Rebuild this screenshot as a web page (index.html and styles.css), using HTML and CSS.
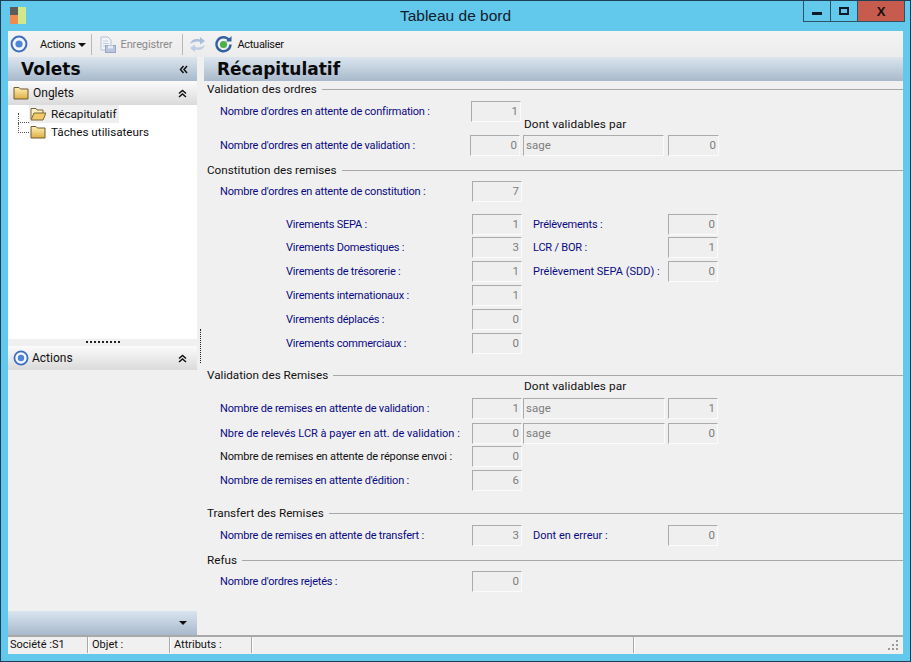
FILE: index.html
```html
<!DOCTYPE html>
<html lang="fr">
<head>
<meta charset="utf-8">
<title>Tableau de bord</title>
<link rel="stylesheet" href="styles.css">
</head>
<body>
<svg class="defs" width="0" height="0" aria-hidden="true">
  <defs>
    <linearGradient id="fold" x1="0" y1="0" x2="0" y2="1"><stop offset="0" stop-color="#fff0b4"/><stop offset="1" stop-color="#dfae45"/></linearGradient>
    <symbol id="target" viewBox="0 0 18 18"><circle cx="9" cy="9" r="7.4" fill="#f4f7fb" stroke="#3d6fc0" stroke-width="2"/><circle cx="9" cy="9" r="3.6" fill="#4f86d8"/></symbol>
    <symbol id="folder" viewBox="0 0 16 14"><path d="M1 13V1.500h5L7.500 3H15v10z" fill="url(#fold)" stroke="#6b5a35"/></symbol>
    <symbol id="folder-open" viewBox="0 0 16 14"><path d="M1 12V1.500h5L7 3h6v3" fill="#fdf1c0" stroke="#7b6536"/><path d="M1 13L4 6h12l-3 7z" fill="#f1c968" stroke="#7b6536"/></symbol>
    <symbol id="chev-up" viewBox="0 0 9 9"><path d="M1 4.500l3.500-3 3.500 3M1 8l3.500-3 3.500 3" fill="none" stroke="#111" stroke-width="1.500"/></symbol>
    <symbol id="chev-left" viewBox="0 0 9 9"><path d="M4.500 1l-3 3.500 3 3.500M8 1L5 4.500 8 8" fill="none" stroke="#111" stroke-width="1.500"/></symbol>
  </defs>
</svg>
<div class="window">
  <header class="titlebar">
    <svg class="app-icon" viewBox="0 0 16 17" width="16" height="17"><rect width="8" height="8" fill="#5c5c5c"/><rect y="8" width="8" height="9" fill="#ef8b4d"/><rect x="8" width="8" height="17" fill="#cfe88a"/></svg>
    <div class="title">Tableau de bord</div>
    <div class="winbtns">
      <div class="winbtn min"><span class="min-glyph"></span></div>
      <div class="winbtn max"><span class="max-glyph"></span></div>
      <div class="winbtn close">X</div>
    </div>
  </header>
  <main class="client">
    <div class="toolbar">
      <svg class="tb-target" width="18" height="18"><use href="#target"/></svg>
      <span class="tb-text tb-actions">Actions</span><span class="caret"></span>
      <span class="tb-sep sep-a"></span>
      <svg class="tb-save" viewBox="0 0 17 17" width="17" height="17"><path d="M2 1h7l3 3v10H2z" fill="#f1f4f8" stroke="#b5c0d2"/><path d="M4 5h5M4 7.500h6M4 10h3" stroke="#c3cede"/><rect x="6.500" y="9.500" width="10" height="7" fill="#b9c4df" stroke="#98a6c4"/><rect x="9" y="9.500" width="5" height="3" fill="#e4e9f3"/></svg>
      <span class="tb-text tb-disabled">Enregistrer</span>
      <span class="tb-sep sep-b"></span>
      <svg class="tb-sync" viewBox="0 0 17 17" width="17" height="17"><path d="M1 8C2 4 6 2 11 3.500V1l5 4-5 3.500V6C7 5 4 6 1 8z" fill="#a9bedc"/><path d="M16 9c-1 4-5 6-10 4.500V16l-5-4 5-3.500V11c4 1 7 0 10-2z" fill="#bccde5"/></svg>
      <svg class="tb-refresh" viewBox="0 0 17 17" width="17" height="17"><path d="M14.200 4.200A7 7 0 1 0 15.500 8.500" fill="none" stroke="#33609f" stroke-width="2.400"/><path d="M11 5.500h5.500V0z" fill="#33609f"/><circle cx="8.500" cy="8.500" r="3.600" fill="#4fb04a"/></svg>
      <span class="tb-text tb-refresh-text">Actualiser</span>
    </div>
    <div class="workspace">
      <aside class="left">
        <div class="panel-head volets"><span>Volets</span><svg class="dbl" width="9" height="9"><use href="#chev-left"/></svg></div>
        <div class="sub-head"><svg class="sub-icon" width="16" height="14"><use href="#folder"/></svg><span class="sub-text">Onglets</span><svg class="chev" width="9" height="9"><use href="#chev-up"/></svg></div>
        <div class="tree">
          <div class="tree-row first"><span class="conn conn-first"></span><span class="node selected"><svg width="16" height="14"><use href="#folder-open"/></svg><span>Récapitulatif</span></span></div>
          <div class="tree-row"><span class="conn conn-last"></span><span class="node"><svg width="16" height="14"><use href="#folder"/></svg><span>Tâches utilisateurs</span></span></div>
        </div>
        <div class="h-split"><span class="h-dots"></span></div>
        <div class="sub-head"><svg class="sub-icon" width="16" height="16"><use href="#target"/></svg><span class="sub-text tight">Actions</span><svg class="chev" width="9" height="9"><use href="#chev-up"/></svg></div>
        <div class="actions-body"></div>
        <div class="panel-foot"><span class="foot-caret"></span></div>
      </aside>
      <div class="v-split"><span class="v-dots"></span></div>
      <section class="right">
        <div class="panel-head recap"><span>Récapitulatif</span></div>
        <div class="form">

          <div class="legend l1"><span>Validation des ordres</span><i></i></div>
          <div class="row r1"><label class="lbl">Nombre d'ordres en attente de confirmation :</label><output class="fld f1">1</output></div>
          <div class="note n1">Dont validables par</div>
          <div class="row r2"><label class="lbl lbl-s">Nombre d'ordres en attente de validation :</label><output class="fld f0">0</output><output class="fld wide">sage</output><output class="fld f3">0</output></div>

          <div class="legend l2"><span>Constitution des remises</span><i></i></div>
          <div class="row r3"><label class="lbl">Nombre d'ordres en attente de constitution :</label><output class="fld f2">7</output></div>

          <div class="row r4"><label class="lbl sub">Virements SEPA :</label><output class="fld f2">1</output><label class="lbl2">Prélèvements :</label><output class="fld f4">0</output></div>
          <div class="row r5a"><label class="lbl sub">Virements Domestiques :</label><output class="fld f2">3</output><label class="lbl2">LCR / BOR :</label><output class="fld f4">1</output></div>
          <div class="row r5"><label class="lbl sub">Virements de trésorerie :</label><output class="fld f2">1</output><label class="lbl2 loose">Prélèvement SEPA (SDD) :</label><output class="fld f4">0</output></div>
          <div class="row r5"><label class="lbl sub">Virements internationaux :</label><output class="fld f2">1</output></div>
          <div class="row r5"><label class="lbl sub">Virements déplacés :</label><output class="fld f2">0</output></div>
          <div class="row r5"><label class="lbl sub">Virements commerciaux :</label><output class="fld f2">0</output></div>

          <div class="legend l3"><span>Validation des Remises</span><i></i></div>
          <div class="note n2">Dont validables par</div>
          <div class="row r6"><label class="lbl">Nombre de remises en attente de validation :</label><output class="fld f2">1</output><output class="fld wide w2">sage</output><output class="fld f4 near">1</output></div>
          <div class="row r7"><label class="lbl loose">Nbre de relevés LCR à payer en att. de validation :</label><output class="fld f2">0</output><output class="fld wide w2">sage</output><output class="fld f4 near">0</output></div>
          <div class="row r8"><label class="lbl dark">Nombre de remises en attente de réponse envoi :</label><output class="fld f2">0</output></div>
          <div class="row r7b"><label class="lbl">Nombre de remises en attente d'édition :</label><output class="fld f2">6</output></div>

          <div class="legend l4"><span>Transfert des Remises</span><i></i></div>
          <div class="row r9"><label class="lbl">Nombre de remises en attente de transfert :</label><output class="fld f2">3</output><label class="lbl2 loose">Dont en erreur :</label><output class="fld f4">0</output></div>

          <div class="legend l5"><span>Refus</span><i></i></div>
          <div class="row r9b"><label class="lbl">Nombre d'ordres rejetés :</label><output class="fld f2">0</output></div>
        </div>
      </section>
    </div>
    <footer class="status">
      <span class="cell c1">Société :S1</span>
      <span class="cell c2">Objet :</span>
      <span class="cell c3">Attributs :</span>
      <span class="cell c4"></span>
      <span class="cell c5"></span>
      <svg class="grip" width="11" height="11" viewBox="0 0 11 11"><path d="M8 0h2v2H8zM4 4h2v2H4zM8 4h2v2H8zM0 8h2v2H0zM4 8h2v2H4zM8 8h2v2H8z" fill="#9a9a9a"/></svg>
    </footer>
  </main>
</div>
</body>
</html>
```
FILE: styles.css
```css
* { box-sizing: border-box; }
html, body { margin: 0; padding: 0; }
body { width: 911px; height: 662px; overflow: hidden; font-family: Roboto, "Liberation Sans", Arial, sans-serif; font-size: 11px; letter-spacing: -0.2px; color: #111; }
label, output, span { white-space: nowrap; }
.defs { display: block; height: 0; }
.window { width: 911px; height: 662px; background: #63c9ec; border: 1px solid #1e3f55; display: flex; flex-direction: column; }
.titlebar { height: 30px; display: flex; align-items: flex-start; flex: none; }
.app-icon { margin: 6px 0 0 9px; }
.title { flex: 1; text-align: center; font-family: "Liberation Sans", Arial, sans-serif; font-size: 15.5px; letter-spacing: 0; line-height: 30px; color: #10202c; padding-left: 82px; }
.winbtns { display: flex; margin-right: 5px; height: 21px; border: 1px solid #2d5165; border-top: 0; }
.winbtn { height: 20px; display: flex; align-items: center; justify-content: center; }
.winbtn.min { width: 27px; border-right: 1px solid #2d5165; }
.winbtn.max { width: 27px; border-right: 1px solid #2d5165; }
.winbtn.close { width: 46px; background: #c75b4e; font-family: "Liberation Sans", Arial, sans-serif; font-weight: bold; font-size: 13px; color: #111; }
.min-glyph { width: 10px; height: 3px; background: #0b1a24; margin-top: 5px; }
.max-glyph { width: 10px; height: 8px; border: 2px solid #0b1a24; }
.client { flex: 1; margin: 0 7px 7px 7px; background: #f0f0f0; display: flex; flex-direction: column; min-height: 0; }
.toolbar { height: 26px; flex: none; display: flex; align-items: center; background: linear-gradient(#f3f3f3, #ececec); }
.tb-target { margin-left: 2px; }
.tb-text { font-size: 11px; letter-spacing: -0.1px; }
.tb-actions { margin-left: 12px; letter-spacing: -0.25px; }
.caret { width: 0; height: 0; margin: 2px 0 0 3px; border: 4px solid transparent; border-top-color: #111; border-bottom: 0; }
.tb-sep { width: 1px; height: 21px; background: #b8b8b8; }
.sep-a { margin-left: 5px; }
.tb-save { margin-left: 7px; }
.tb-disabled { color: #8a8a8a; margin-left: 4px; }
.sep-b { margin-left: 10px; }
.tb-sync { margin-left: 6px; }
.tb-refresh { margin-left: 9px; }
.tb-refresh-text { margin-left: 5px; letter-spacing: -0.3px; }

.workspace { flex: 1; display: flex; min-height: 0; }
.left { width: 189px; display: flex; flex-direction: column; flex: none; }
.v-split { width: 7px; flex: none; display: flex; align-items: center; justify-content: center; }
.v-dots { height: 34px; border-left: 1px dotted #222; }
.right { flex: 1; display: flex; flex-direction: column; min-width: 0; }

.panel-head { height: 24px; flex: none; display: flex; align-items: center; justify-content: space-between; background: linear-gradient(#dbe5ef, #a8b9cb); font-family: "DejaVu Sans", Verdana, sans-serif; font-weight: bold; font-size: 17px; letter-spacing: 0; color: #0a0a0a; }
.volets { padding: 0 9px 0 13px; }
.recap { padding-left: 13px; }
.sub-head { height: 24px; flex: none; display: flex; align-items: center; background: linear-gradient(#fbfbfb, #dadada); }
.sub-icon { margin-left: 5px; }
.sub-text { margin-left: 4px; flex: 1; font-size: 12px; letter-spacing: 0; }
.sub-text.tight { margin-left: 3px; }
.chev { margin-right: 10px; }
.tree { flex: none; height: 234px; background: #fff; }
.tree-row { height: 18px; display: flex; align-items: center; }
.conn { width: 11px; margin-left: 10px; flex: none; border-left: 1px dotted #555; border-bottom: 1px dotted #555; }
.conn-first { height: 10px; margin-top: 8px; align-self: flex-start; }
.conn-last { height: 10px; margin-top: -9px; }
.node { display: flex; align-items: center; gap: 5px; height: 18px; padding: 0 3px 0 1px; font-size: 11.700px; letter-spacing: 0; }
.node.selected { background: #efefef; }
.h-split { height: 7px; flex: none; display: flex; justify-content: center; padding-top: 2px; }
.h-dots { width: 34px; height: 1px; border-top: 2px dotted #222; }
.actions-body { flex: 1; }
.panel-foot { height: 24px; flex: none; display: flex; justify-content: flex-end; align-items: center; padding-right: 10px; background: linear-gradient(#d9e4f0, #a8b9cb); }
.foot-caret { width: 0; height: 0; border: 4px solid transparent; border-top-color: #111; border-bottom: 0; }

.form { flex: 1; min-height: 0; }
.legend { display: flex; align-items: center; height: 14px; padding-left: 3px; color: #111; font-size: 11.700px; letter-spacing: 0; }
.legend i { flex: 1; height: 1px; background: #a8a8a8; margin-left: 5px; }
.l1 { margin-top: 1px; }
.l2 { margin-top: 7px; }
.l3 { margin-top: 14px; }
.l4 { margin-top: 15px; }
.l5 { margin-top: 7px; }

.row { display: flex; align-items: center; height: 21px; padding-left: 16px; }
.lbl { width: 251px; color: #0a0a82; flex: none; }
.lbl-s { width: 250px; }
.lbl.sub { padding-left: 66px; width: 251px; }
.lbl.dark { color: #111; letter-spacing: -0.15px; }
.lbl2 { width: 135px; margin-left: 11px; color: #0a0a82; flex: none; }
.loose { letter-spacing: 0; }
.fld { height: 21px; flex: none; border: 1px solid #ababab; border-right-color: #fbfbfb; border-bottom-color: #fbfbfb; background: #efefef; color: #7d7d7d; text-align: right; padding-right: 2px; line-height: 18px; font-size: 11.500px; letter-spacing: 0; display: block; }
.f0, .f1, .f2 { width: 50px; }
.f2 { margin-left: 1px; }
.f3 { width: 51px; margin-left: 4px; }
.f4 { width: 50px; }
.wide { width: 141px; margin-left: 3px; text-align: left; padding-left: 2px; }
.w2 { margin-left: 1px; width: 142px; }
.near { margin-left: 3px; }
.note { height: 13px; line-height: 13px; padding-left: 320px; color: #111; font-size: 11.800px; letter-spacing: 0.100px; }

.r1 { margin-top: 5px; }
.n1 { margin-top: -4px; }
.r2 { margin-top: 4px; }
.r3 { margin-top: 4px; }
.r4 { margin-top: 12px; }
.r5a { margin-top: 2px; }
.r5 { margin-top: 3px; }
.n2 { margin-top: -2px; }
.r6 { margin-top: 5px; }
.r7 { margin-top: 4px; }
.r7b { margin-top: 3px; }
.r8 { margin-top: 2px; }
.r9 { margin-top: 5px; }
.r9b { margin-top: 4px; }

.status { height: 19px; flex: none; display: flex; align-items: flex-start; border-top: 2px solid #a8a8a8; background: #f0f0f0; }
.cell { display: block; height: 16px; font-size: 11px; letter-spacing: 0; line-height: 16px; padding-left: 2px; border-right: 1px solid #a8a8a8; box-shadow: 1px 0 0 #fff; margin-right: 1px; }
.c1 { width: 80px; }
.c2 { width: 81px; padding-left: 3px; }
.c3 { width: 81px; padding-left: 3px; }
.c4 { width: 381px; }
.c5 { flex: 1; border-right: 0; box-shadow: none; }
.grip { margin: 3px 4px 0 0; flex: none; }
```
